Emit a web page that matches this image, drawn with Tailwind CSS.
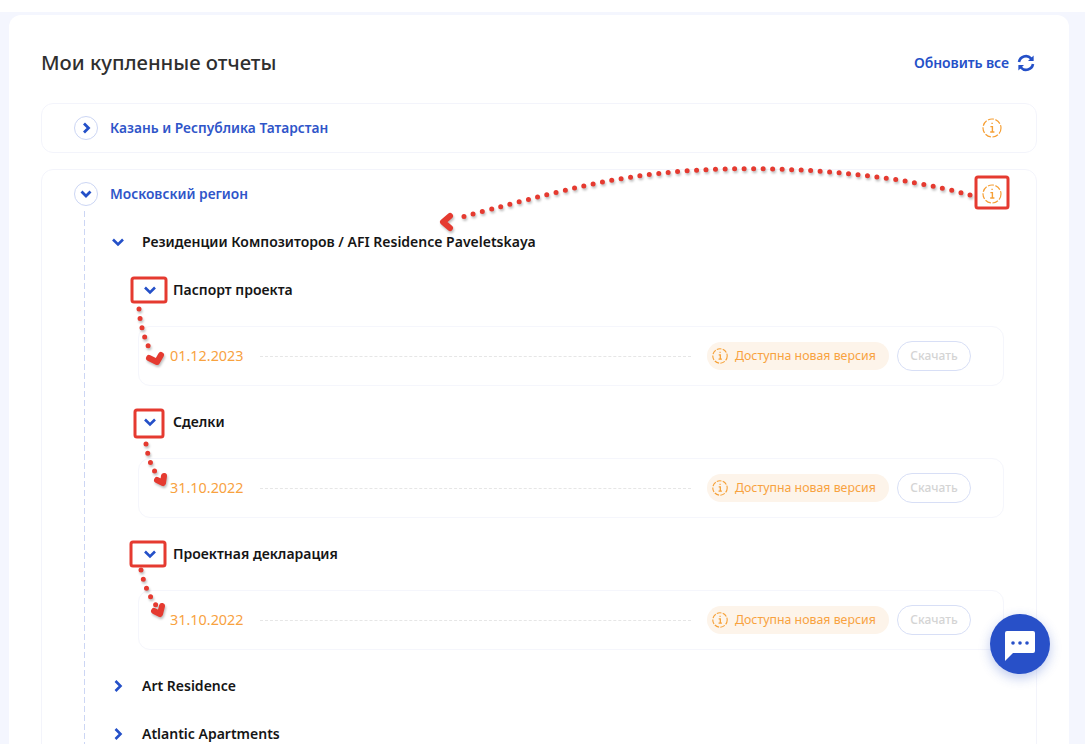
<!DOCTYPE html>
<html lang="ru">

<head>
    <meta charset="UTF-8" />
    <title>Мои купленные отчеты</title>
    <script src="https://cdn.jsdelivr.net/npm/@tailwindcss/browser@4"></script>
</head>

<body class="relative h-[744px] overflow-hidden bg-white font-['Noto_Sans',sans-serif]">

    <div class="mt-3 h-[732px] overflow-hidden bg-[#f4f6fe] pt-[3px] pl-[9px] pr-4">
        <main class="h-[729px] overflow-hidden rounded-t-xl bg-white px-8">

            <!-- Header -->
            <div class="flex h-[88px] items-center justify-between pt-[8px] pr-[2px]">
                <h1 class="mt-[-2px] text-[20.25px] font-medium text-[#2f2f2f]">Мои купленные отчеты</h1>
                <a class="flex items-center gap-2 text-[14px] font-semibold text-[#2450c8]">
                    <span class="mt-[-2px] tracking-[-0.08px]">Обновить все</span>
                    <svg class="h-[18px] w-[18px]" viewBox="0 0 18 18" fill="none" stroke="#2450c8" stroke-width="2.6">
                        <path d="M2 8a7 7 0 0 1 12-3.600l1.500 1.500" />
                        <path d="M16 10a7 7 0 0 1-12 3.600l-1.500-1.500" />
                        <path d="M16.600 1.500v5.600H11z" fill="#2450c8" stroke="none" />
                        <path d="M1.400 16.500v-5.600H7z" fill="#2450c8" stroke="none" />
                    </svg>
                </a>
            </div>

            <!-- Kazan -->
            <div class="flex h-[50px] items-center justify-between rounded-xl border border-[#f3f4fb] pl-[32px] pr-[34px]">
                <div class="flex items-center gap-3">
                    <span class="flex h-6 w-6 items-center justify-center rounded-full border border-[#ccd6f4]">
                        <svg class="h-3 w-3" viewBox="0 0 12 12" fill="none" stroke="#2450c8" stroke-width="2.8">
                            <path d="M4 1.500l4.500 4.500-4.500 4.500" />
                        </svg>
                    </span>
                    <span class="text-[13.75px] font-semibold text-[#2f55c9]">Казань и Республика Татарстан</span>
                </div>
                <svg class="h-5 w-5" viewBox="0 0 20 20" fill="none">
                    <circle cx="10" cy="10" r="9" stroke="#f6a036" stroke-width="1.2" stroke-dasharray="6 1.600" />
                    <path d="M8.400 8.600H10.400V14M8.200 14H12.400M9.400 5.400H10.800" stroke="#f6a036" stroke-width="1.400" />
                </svg>
            </div>

            <!-- Moscow region -->
            <div class="mt-4 h-[640px] rounded-xl border border-[#f3f4fb] pl-[32px] pr-[32px]">
                <div class="flex h-12 items-center justify-between pr-[2px]">
                    <div class="flex items-center gap-3">
                        <span class="flex h-6 w-6 items-center justify-center rounded-full border border-[#ccd6f4]">
                            <svg class="h-3 w-3" viewBox="0 0 12 12" fill="none" stroke="#2450c8" stroke-width="2.8">
                                <path d="M1.500 3.500l4.500 4.500 4.500-4.500" />
                            </svg>
                        </span>
                        <span class="text-[13.75px] font-semibold text-[#2f55c9]">Московский регион</span>
                    </div>
                    <svg class="h-5 w-5" viewBox="0 0 20 20" fill="none">
                        <circle cx="10" cy="10" r="9" stroke="#f6a036" stroke-width="1.2" stroke-dasharray="6 1.600" />
                        <path d="M8.400 8.600H10.400V14M8.200 14H12.400M9.400 5.400H10.800" stroke="#f6a036" stroke-width="1.400" />
                    </svg>
                </div>

                <div class="ml-[10px] mt-[-7px] bg-[linear-gradient(#ccd6f4_66%,transparent_66%)] bg-[length:1px_9px] bg-repeat-y pt-[7px] pl-[28px]">
                    <!-- Project -->
                    <div class="flex h-12 items-center gap-[18px]">
                        <svg class="h-3 w-3" viewBox="0 0 12 12" fill="none" stroke="#2450c8" stroke-width="2.6">
                            <path d="M1 3.500l5 5 5-5" />
                        </svg>
                        <span class="mt-[-2px] text-[14px] font-semibold text-[#151515]">Резиденции Композиторов / AFI Residence Paveletskaya</span>
                    </div>

                    <!-- Паспорт проекта -->
                    <div class="flex h-12 items-center gap-[17px] pl-8">
                        <svg class="h-3 w-3" viewBox="0 0 12 12" fill="none" stroke="#2450c8" stroke-width="2.6">
                            <path d="M1 3.500l5 5 5-5" />
                        </svg>
                        <span class="mt-[-2px] text-[14px] font-semibold text-[#151515]">Паспорт проекта</span>
                    </div>
                    <div class="ml-[26px] mt-3 flex h-[60px] w-[866px] items-center rounded-xl border border-[#f5f6fc] pl-[31px] pr-[32px]">
                        <span class="text-[14.4px] text-[#f8a23f]">01.12.2023</span>
                        <span class="mx-4 flex-1 border-t border-dashed border-[#e6e6e6]"></span>
                        <span class="flex h-7 w-[182px] items-center gap-[7px] rounded-full bg-[#fdf4ea] pl-[5px] text-[12.35px] text-[#f8a23f]">
                            <svg class="h-4 w-4" viewBox="0 0 20 20" fill="none">
                                <circle cx="10" cy="10" r="9" stroke="#f6a036" stroke-width="1.400" stroke-dasharray="6 1.600" />
                                <path d="M8.400 8.600H10.400V14M8.200 14H12.400M9.400 5.400H10.800" stroke="#f6a036" stroke-width="1.600" />
                            </svg>
                            Доступна новая версия
                        </span>
                        <button class="ml-2 h-[30px] w-[74px] rounded-full border border-[#d8dff6] text-[12px] font-medium text-[#d4d4d4]">Скачать</button>
                    </div>

                    <!-- Сделки -->
                    <div class="mt-3 flex h-12 items-center gap-[17px] pl-8">
                        <svg class="h-3 w-3" viewBox="0 0 12 12" fill="none" stroke="#2450c8" stroke-width="2.6">
                            <path d="M1 3.500l5 5 5-5" />
                        </svg>
                        <span class="mt-[-2px] text-[14px] font-semibold text-[#151515]">Сделки</span>
                    </div>
                    <div class="ml-[26px] mt-3 flex h-[60px] w-[866px] items-center rounded-xl border border-[#f5f6fc] pl-[31px] pr-[32px]">
                        <span class="text-[14.4px] text-[#f8a23f]">31.10.2022</span>
                        <span class="mx-4 flex-1 border-t border-dashed border-[#e6e6e6]"></span>
                        <span class="flex h-7 w-[182px] items-center gap-[7px] rounded-full bg-[#fdf4ea] pl-[5px] text-[12.35px] text-[#f8a23f]">
                            <svg class="h-4 w-4" viewBox="0 0 20 20" fill="none">
                                <circle cx="10" cy="10" r="9" stroke="#f6a036" stroke-width="1.400" stroke-dasharray="6 1.600" />
                                <path d="M8.400 8.600H10.400V14M8.200 14H12.400M9.400 5.400H10.800" stroke="#f6a036" stroke-width="1.600" />
                            </svg>
                            Доступна новая версия
                        </span>
                        <button class="ml-2 h-[30px] w-[74px] rounded-full border border-[#d8dff6] text-[12px] font-medium text-[#d4d4d4]">Скачать</button>
                    </div>

                    <!-- Проектная декларация -->
                    <div class="mt-3 flex h-12 items-center gap-[17px] pl-8">
                        <svg class="h-3 w-3" viewBox="0 0 12 12" fill="none" stroke="#2450c8" stroke-width="2.6">
                            <path d="M1 3.500l5 5 5-5" />
                        </svg>
                        <span class="mt-[-2px] text-[14px] font-semibold text-[#151515]">Проектная декларация</span>
                    </div>
                    <div class="ml-[26px] mt-3 flex h-[60px] w-[866px] items-center rounded-xl border border-[#f5f6fc] pl-[31px] pr-[32px]">
                        <span class="text-[14.4px] text-[#f8a23f]">31.10.2022</span>
                        <span class="mx-4 flex-1 border-t border-dashed border-[#e6e6e6]"></span>
                        <span class="flex h-7 w-[182px] items-center gap-[7px] rounded-full bg-[#fdf4ea] pl-[5px] text-[12.35px] text-[#f8a23f]">
                            <svg class="h-4 w-4" viewBox="0 0 20 20" fill="none">
                                <circle cx="10" cy="10" r="9" stroke="#f6a036" stroke-width="1.400" stroke-dasharray="6 1.600" />
                                <path d="M8.400 8.600H10.400V14M8.200 14H12.400M9.400 5.400H10.800" stroke="#f6a036" stroke-width="1.600" />
                            </svg>
                            Доступна новая версия
                        </span>
                        <button class="ml-2 h-[30px] w-[74px] rounded-full border border-[#d8dff6] text-[12px] font-medium text-[#d4d4d4]">Скачать</button>
                    </div>

                    <!-- Other projects -->
                    <div class="mt-3 flex h-12 items-center gap-[18px]">
                        <svg class="h-3 w-3" viewBox="0 0 12 12" fill="none" stroke="#2450c8" stroke-width="2.6">
                            <path d="M3.500 1l5 5-5 5" />
                        </svg>
                        <span class="mt-[-2px] text-[14px] font-semibold text-[#151515]">Art Residence</span>
                    </div>
                    <div class="flex h-12 items-center gap-[18px]">
                        <svg class="h-3 w-3" viewBox="0 0 12 12" fill="none" stroke="#2450c8" stroke-width="2.6">
                            <path d="M3.500 1l5 5-5 5" />
                        </svg>
                        <span class="mt-[-2px] text-[14px] font-semibold text-[#151515]">Atlantic Apartments</span>
                    </div>
                </div>
            </div>
        </main>
    </div>

    <!-- Chat button -->
    <button class="absolute left-[990px] top-[614px] flex h-[60px] w-[60px] items-center justify-center rounded-full bg-[#2850c8] shadow-[0_4px_12px_rgba(40,80,200,0.3)]">
        <svg class="mt-[4px] h-[30px] w-[30px]" viewBox="0 0 30 30">
            <path d="M2 0H28a2 2 0 0 1 2 2V20a2 2 0 0 1-2 2H8L0 30V2A2 2 0 0 1 2 0z" fill="#fff" />
            <circle cx="8" cy="12" r="1.800" fill="#2850c8" />
            <circle cx="15" cy="12" r="1.800" fill="#2850c8" />
            <circle cx="22" cy="12" r="1.800" fill="#2850c8" />
        </svg>
    </button>

    <!-- Annotation overlay -->
    <svg class="absolute left-0 top-0 h-[744px] w-[1085px]" viewBox="0 0 1085 744" fill="none">
        <g stroke="#e53a30" stroke-width="3">
            <rect x="976" y="177" width="32" height="31" rx="2" />
            <rect x="132" y="278" width="34" height="24" rx="2" />
            <rect x="135" y="410" width="28" height="27" rx="2" />
            <rect x="131" y="542" width="34" height="24" rx="2" />
        </g>
        <g class="drop-shadow-[1px_2px_1px_rgba(0,0,0,0.25)]" stroke="#e53a30" stroke-linecap="round">
            <g stroke-width="5" stroke-dasharray="0 9.500">
                <path d="M970 195C900 176 810 167 725 169C680 170 640 175 602 182C550 193 500 207 458 218" />
                <path d="M139 309C140 325 145 340 151 352" />
                <path d="M146 444C148 458 152 470 160 478" />
                <path d="M141 570C144 585 150 598 158 608" />
            </g>
            <g stroke-width="6" stroke-linejoin="round">
                <path d="M450 216L443 222L450 228" />
                <path d="M149 358L157 362L161 355" />
                <path d="M157 480L163 483L164 476" />
                <path d="M154 611L160 614L162 606" />
            </g>
        </g>
    </svg>

</body>

</html>
